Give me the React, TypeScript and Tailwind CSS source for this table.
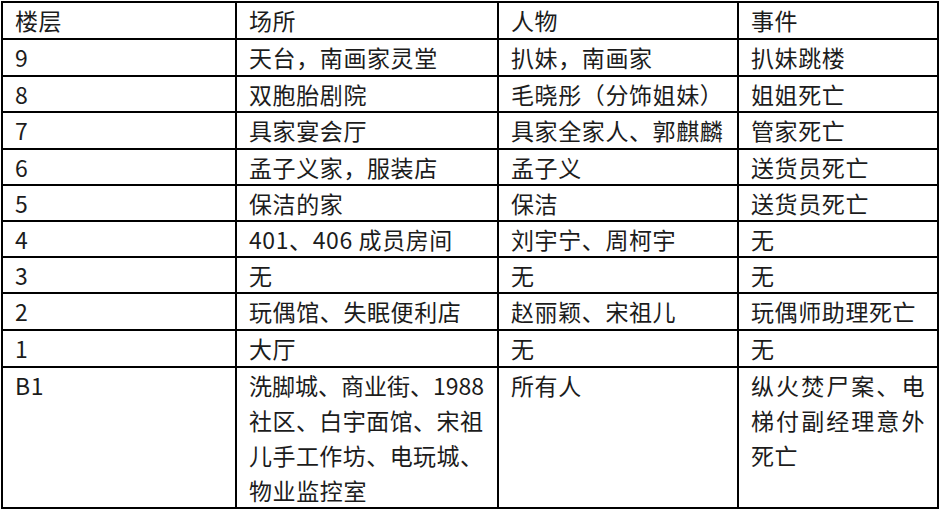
// Floor / location / people / event table, rendered as a bordered grid.

type Row = { floor: string; place: string; people: string; event: string };

const rows: Row[] = [
  { floor: '9', place: '天台，南画家灵堂', people: '扒妹，南画家', event: '扒妹跳楼' },
  { floor: '8', place: '双胞胎剧院', people: '毛晓彤（分饰姐妹）', event: '姐姐死亡' },
  { floor: '7', place: '具家宴会厅', people: '具家全家人、郭麒麟', event: '管家死亡' },
  { floor: '6', place: '孟子义家，服装店', people: '孟子义', event: '送货员死亡' },
  { floor: '5', place: '保洁的家', people: '保洁', event: '送货员死亡' },
  { floor: '4', place: '401、406 成员房间', people: '刘宇宁、周柯宇', event: '无' },
  { floor: '3', place: '无', people: '无', event: '无' },
  { floor: '2', place: '玩偶馆、失眠便利店', people: '赵丽颖、宋祖儿', event: '玩偶师助理死亡' },
  { floor: '1', place: '大厅', people: '无', event: '无' },
];

const cell = 'flex items-center px-[12px] border-r-2 border-b-2 border-black leading-[35px] whitespace-nowrap';
const tall = 'px-[12px] border-r-2 border-b-2 border-black leading-[35px]';
const justified = 'text-justify [text-align-last:justify] whitespace-nowrap';

export default function App() {
  return (
    <div className="w-[942px] h-[511px] bg-white overflow-hidden">
      <div
        className="ml-[1px] mt-[1px] w-[938px] grid grid-cols-[234px_262px_240px_200px] grid-rows-[37px_37px_36px_37px_36px_36px_36px_36px_37px_37px_141px] border-l-2 border-t-2 border-black text-[23px] tracking-[0.6px] text-[#1c1c1c]"
        style={{ fontFamily: '"Noto Sans CJK SC", "Noto Sans", sans-serif' }}
      >
        {/* Header */}
        <div className={cell}>楼层</div>
        <div className={cell}>场所</div>
        <div className={cell}>人物</div>
        <div className={cell}>事件</div>

        {rows.map((r) => (
          <div key={r.floor} className="contents">
            <div className={cell}>{r.floor}</div>
            <div className={cell}>{r.place}</div>
            <div className={cell}>{r.people}</div>
            <div className={cell}>{r.event}</div>
          </div>
        ))}

        {/* B1 — multi-line row */}
        <div className={tall}>B1</div>
        <div className={`${tall} tracking-normal pr-[14px]`}>
          <div className={justified}>洗脚城、商业街、1988</div>
          <div className={justified}>社区、白宇面馆、宋祖</div>
          <div className={justified}>儿手工作坊、电玩城、</div>
          <div className="whitespace-nowrap tracking-[0.6px]">物业监控室</div>
        </div>
        <div className={tall}>所有人</div>
        <div className={tall}>
          <div className={justified}>纵火焚尸案、电</div>
          <div className={justified}>梯付副经理意外</div>
          <div className="whitespace-nowrap">死亡</div>
        </div>
      </div>
    </div>
  );
}
